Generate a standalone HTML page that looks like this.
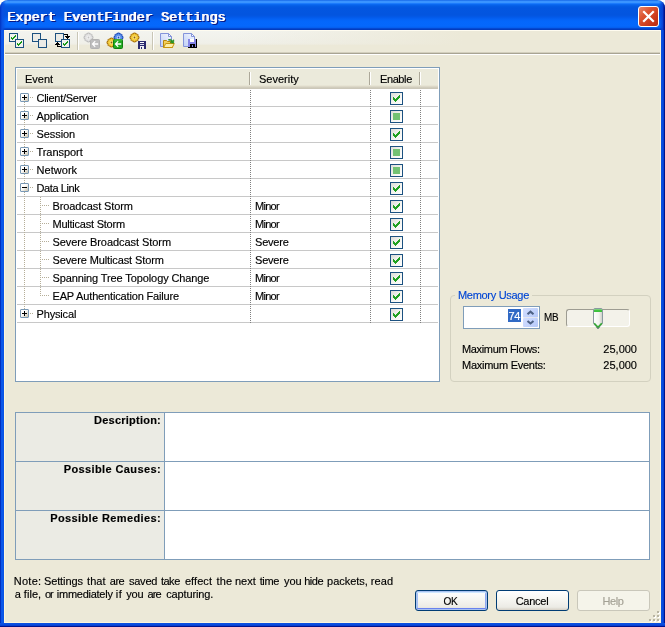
<!DOCTYPE html>
<html><head><meta charset="utf-8"><title>Expert EventFinder Settings</title>
<style>
html,body{margin:0;padding:0}
body{width:665px;height:627px;overflow:hidden;position:relative;background:#fff;font-family:"Liberation Sans",sans-serif;font-size:11px;color:#000;-webkit-text-stroke:0.15px}
i,b{position:absolute;display:block;font-style:normal;font-weight:normal}
.abs{position:absolute}
.win{will-change:transform;position:absolute;left:0;top:0;width:665px;height:627px;background:#ece9d8;border-radius:8px 8px 0 0;overflow:hidden}
.tb{position:absolute;left:0;top:0;width:665px;height:30px;background:linear-gradient(to bottom,#0a59e0 0px,#3a93ff 1px,#3a94ff 2.5px,#1c7bfc 3.5px,#0a68f0 4.5px,#045ce4 6px,#0356e0 8px,#0355df 15px,#0359e8 17px,#0461f3 19px,#0467fb 21px,#0568fc 26px,#0560f0 27.5px,#0449d2 28.5px,#0236b4 30px)}
.tbl{position:absolute;left:0;top:0;width:6px;height:30px;background:linear-gradient(to right,#0033c0 0,#0a4fe0 2px,rgba(10,79,224,0) 6px)}
.tbr{position:absolute;right:0;top:0;width:6px;height:30px;background:linear-gradient(to left,#00138c 0,#00138c 1px,#0a3fd0 2px,rgba(10,63,208,0) 6px)}
.ttl{position:absolute;left:7px;top:10px;height:16px;white-space:pre;font-family:"Liberation Mono",monospace;font-weight:normal;font-size:13.4px;letter-spacing:0.05px;line-height:16px;color:#fff;text-shadow:1px 0 0 #fff,2px 1px 0 #0a1883,1px 1px 0 #0a1883}
.bl{position:absolute;left:0;top:30px;width:4px;height:597px;background:linear-gradient(to right,#0030c0 0,#0030c0 1px,#0a55e8 1px,#0a58ea 3px,#0850e0 4px)}
.br{position:absolute;left:661px;top:30px;width:4px;height:597px;background:linear-gradient(to right,#0a50e0 0,#0a50e0 1px,#0848dc 2px,#0638c8 3px,#00138c 3px,#00138c 4px)}
.bb{position:absolute;left:0;top:623px;width:665px;height:4px;background:linear-gradient(to bottom,#0a50e0 0,#0a50e0 1px,#0848dc 2px,#0638c8 3px,#00138c 3px,#00138c 4px)}
.cls{position:absolute;left:638px;top:6px;width:19px;height:19px;border:1px solid #fff;border-radius:3px;background:linear-gradient(135deg,#e8866a 0%,#dd5430 35%,#c8371a 75%,#b52c12 100%)}
.tool{position:absolute;left:4px;top:30px;width:657px;height:24px;background:linear-gradient(to bottom,#fffcf0 0,#fffcf0 1px,#f3f4ef 1px,#f0f0e9 13px,#efeee6 14px,#ece9d8 15.5px,#ece9d8 21.5px,#d3cfbd 22.5px,#a8a493 23.5px,#a8a493 24px)}
.toolf{position:absolute;left:0;top:1px;width:657px;height:15px;background:linear-gradient(to right,rgba(236,233,216,0) 0,rgba(236,233,216,0) 230px,rgba(236,233,216,1) 460px)}
.toolw{position:absolute;left:4px;top:54px;width:657px;height:1px;background:#fff}
.sep{position:absolute;top:32px;width:1px;height:18px;background:#c9c6b6;box-shadow:1px 0 0 #fff}
svg{position:absolute;display:block;overflow:visible}
/* list */
.list{position:absolute;left:15px;top:67px;width:421px;height:311px;border:1px solid #7f9db9;padding:1px;background:#fff;overflow:hidden}
.list>*{position:absolute}
.lhdr{left:1px;top:1px;width:421px;height:20px;background:linear-gradient(to bottom,#ebeadb 0,#ebeadb 16px,#e2decd 17px,#d6d2c2 18px,#cbc7b8 19px,#cbc7b8 20px)}
.list .row{left:1px;width:421px;height:17px;border-bottom:1px solid #c8c8c8;margin-top:1px}
.list .vd,.list .tv,.list .th{margin-left:1px;margin-top:1px}
.hl{position:absolute;top:1px;line-height:19px;white-space:nowrap}
.hs{top:3px;width:1px;height:13px;background:#aca899;box-shadow:1px 0 0 #fff}
.vd{top:21px;width:1px;height:233px;background:linear-gradient(to bottom,#808080 50%,rgba(0,0,0,0) 50%);background-size:1px 2px}
.tv{width:1px;background:linear-gradient(to bottom,#b5ae98 50%,rgba(0,0,0,0) 50%);background-size:1px 2px}
.row .th{top:8px;height:1px;margin:0;background:linear-gradient(to right,#b5ae98 50%,rgba(0,0,0,0) 50%);background-size:2px 1px}
.t{position:absolute;top:0;line-height:18px;white-space:nowrap}
.xb{left:3px;top:4px;width:7px;height:7px;border:1px solid #7898b5;border-radius:1px;background:linear-gradient(135deg,#fff 0,#fff 40%,#c9c2ad 100%)}
.xb:before{content:"";position:absolute;left:1px;top:3px;width:5px;height:1px;background:#000}
.xb.plus:after{content:"";position:absolute;left:3px;top:1px;width:1px;height:5px;background:#000}
.cb{left:373px;top:3px;width:11px;height:11px;border:1px solid #1c5180;background:linear-gradient(135deg,#dcdcd7 0,#f3f3ef 50%,#fff 100%)}
.cb.check:after{content:"";position:absolute;left:2px;top:2px;width:7px;height:7px;background:
 linear-gradient(#21a121,#21a121) 0 2px/1px 3px no-repeat,
 linear-gradient(#21a121,#21a121) 1px 3px/1px 3px no-repeat,
 linear-gradient(#21a121,#21a121) 2px 4px/1px 3px no-repeat,
 linear-gradient(#21a121,#21a121) 3px 3px/1px 3px no-repeat,
 linear-gradient(#21a121,#21a121) 4px 2px/1px 3px no-repeat,
 linear-gradient(#21a121,#21a121) 5px 1px/1px 3px no-repeat,
 linear-gradient(#21a121,#21a121) 6px 0/1px 3px no-repeat}
.cb.mixed:after{content:"";position:absolute;left:2px;top:2px;width:7px;height:7px;background:#73c273}
/* group */
.grp{position:absolute;left:450px;top:295px;width:199px;height:85px;border:1px solid #d3d1c0;border-radius:4px}
.grpl{position:absolute;left:455px;top:288px;padding:0 3px;background:#ece9d8;color:#0046d5;line-height:14px;white-space:nowrap}
.inp{position:absolute;left:463px;top:306px;width:75px;height:21px;border:1px solid #7f9db9;background:#fff}
.sel{position:absolute;left:508px;top:309px;width:13px;height:13px;background:#316ac5;color:#fff;line-height:15px;text-align:center;white-space:nowrap;letter-spacing:-0.4px;text-indent:-0.4px;overflow:hidden}
.spu,.spd{position:absolute;left:523px;width:15px;border-radius:1px;background:linear-gradient(135deg,#d3defd 0,#c3d3fd 55%,#b6c8f7 100%)}
.spu{top:308px;height:9px;border-bottom:1px solid #e4e6ee}.spd{top:318px;height:9px}
.lbl{position:absolute;white-space:nowrap;line-height:14px}
.trk{position:absolute;left:566px;top:309px;width:62px;height:16px;border:1px solid;border-color:#9d9c92 #fff #fff #9d9c92;border-radius:3px;background:#f3f2ea}
/* desc table */
.dt{position:absolute;left:15px;top:412px;width:633px;height:146px;border:1px solid #7f9db9;background:#fff}
.dtl{position:absolute;left:0;top:0;width:148px;height:146px;background:#ebebe4;border-right:1px solid #7f9db9}
.dth{position:absolute;left:0;width:633px;height:1px;background:#7f9db9}
.dtt{position:absolute;right:488px;font-weight:bold;white-space:nowrap;line-height:14px}
/* buttons */
.btn{position:absolute;top:590px;width:71px;height:19px;border:1px solid #003c74;border-radius:3px;background:linear-gradient(to bottom,#fff 0,#f6f6f1 45%,#ecebe5 85%,#d6d0c5 100%);text-align:center;line-height:21px}
.btn.def{box-shadow:inset 0 0 0 1px #a9c2f0,inset 0 2px 0 0 #cee7ff,inset 0 -2px 0 0 #6982ee,inset 2px 0 0 0 #a5c0f3,inset -2px 0 0 0 #8fa8ef}
.btn.dis{border-color:#c9c7ba;background:#f5f4ea;color:#a4a195}
.w{position:absolute;white-space:nowrap;line-height:14px;letter-spacing:0.08px}
.inl{position:absolute;background:#fbf5dc}
.vd,.tv{z-index:1}.xb{z-index:2}
</style></head>
<body>
<div class="win">
<div class="tb"><div class="tbl"></div><div class="tbr"></div></div>
<div class="ttl">Expert EventFinder Settings</div>
<div class="cls"><svg width="19" height="19" style="left:0;top:0"><path d="M5 5 L14 14 M14 5 L5 14" stroke="#fff" stroke-width="2.2" stroke-linecap="square" fill="none"/></svg></div>
<div class="bl"></div><div class="br"></div><div class="bb"></div>
<div class="tool"><div class="toolf"></div></div><div class="toolw"></div><div class="inl" style="left:4px;top:30px;width:1px;height:593px"></div><div class="inl" style="left:660px;top:30px;width:1px;height:593px"></div><div class="inl" style="left:4px;top:622px;width:657px;height:1px"></div>
<i class="sep" style="left:77px"></i><i class="sep" style="left:152px"></i>
<!-- ICONS -->
<!-- icon1 -->
<svg width="16" height="16" style="left:9px;top:33px" shape-rendering="crispEdges">
<rect x="0.5" y="0.5" width="8" height="8" fill="#f2f2ee" stroke="#1c5180"/><rect x="6.5" y="6.5" width="8" height="8" fill="#f2f2ee" stroke="#1c5180"/>
<g fill="#189a18"><rect x="2" y="4" width="1" height="2"/><rect x="3" y="5" width="1" height="2"/><rect x="4" y="4" width="1" height="2"/><rect x="5" y="3" width="1" height="2"/><rect x="6" y="2" width="1" height="2"/>
<rect x="8" y="10" width="1" height="2"/><rect x="9" y="11" width="1" height="2"/><rect x="10" y="10" width="1" height="2"/><rect x="11" y="9" width="1" height="2"/><rect x="12" y="8" width="1" height="2"/></g></svg>
<!-- icon2 -->
<svg width="16" height="16" style="left:32px;top:33px" shape-rendering="crispEdges">
<rect x="0.5" y="0.5" width="8" height="8" fill="#ebebe6" stroke="#1c5180"/><rect x="6.5" y="6.5" width="8" height="8" fill="#ebebe6" stroke="#1c5180"/></svg>
<!-- icon3 -->
<svg width="16" height="16" style="left:55px;top:33px" shape-rendering="crispEdges">
<rect x="0.5" y="0.5" width="8" height="8" fill="#ebebe6" stroke="#1c5180"/><rect x="6.5" y="6.5" width="8" height="8" fill="#f2f2ee" stroke="#1c5180"/>
<g fill="#189a18"><rect x="8" y="10" width="1" height="2"/><rect x="9" y="11" width="1" height="2"/><rect x="10" y="10" width="1" height="2"/><rect x="11" y="9" width="1" height="2"/><rect x="12" y="8" width="1" height="2"/></g>
<g fill="#000"><rect x="9" y="1" width="4" height="1"/><rect x="12" y="1" width="1" height="3"/><rect x="10" y="3" width="5" height="1"/><rect x="11" y="4" width="3" height="1"/><rect x="12" y="5" width="1" height="1"/>
<rect x="2" y="13" width="4" height="1"/><rect x="2" y="11" width="1" height="3"/><rect x="0" y="11" width="5" height="1"/><rect x="1" y="10" width="3" height="1"/><rect x="2" y="9" width="1" height="1"/></g></svg>
<!-- icon4 disabled gear + arrow -->
<svg width="17" height="17" style="left:84px;top:33px"><path d="M8.95 3.54 L8.95 5.46 L7.92 5.61 L7.71 6.13 L8.32 6.97 L6.97 8.32 L6.13 7.71 L5.61 7.92 L5.46 8.95 L3.54 8.95 L3.39 7.92 L2.87 7.71 L2.03 8.32 L0.68 6.97 L1.29 6.13 L1.08 5.61 L0.05 5.46 L0.05 3.54 L1.08 3.39 L1.29 2.87 L0.68 2.03 L2.03 0.68 L2.87 1.29 L3.39 1.08 L3.54 0.05 L5.46 0.05 L5.61 1.08 L6.13 1.29 L6.97 0.68 L8.32 2.03 L7.71 2.87 L7.92 3.39 Z" fill="#e4e4e4" stroke="#bcbcbc" stroke-width="1" stroke-linejoin="round"/><circle cx="4.5" cy="4.5" r="1.7" fill="#f4f4f4"/><circle cx="4.5" cy="4.5" r="0.9" fill="#c4c4c4"/><rect x="6.5" y="6.5" width="9" height="9" rx="1" fill="#bdbdbd" stroke="#b2b2b2"/><path d="M7.6 11 L10.8 7.8 L11.6 8.6 L10.2 10.2 L14.2 10.2 L14.2 11.8 L10.2 11.8 L11.6 13.4 L10.8 14.2 Z" fill="#fff"/></svg>
<!-- icon5 gears + green arrow -->
<svg width="17" height="17" style="left:107px;top:33px"><path d="M15.95 3.54 L15.95 5.46 L14.92 5.61 L14.71 6.13 L15.32 6.97 L13.97 8.32 L13.13 7.71 L12.61 7.92 L12.46 8.95 L10.54 8.95 L10.39 7.92 L9.87 7.71 L9.03 8.32 L7.68 6.97 L8.29 6.13 L8.08 5.61 L7.05 5.46 L7.05 3.54 L8.08 3.39 L8.29 2.87 L7.68 2.03 L9.03 0.68 L9.87 1.29 L10.39 1.08 L10.54 0.05 L12.46 0.05 L12.61 1.08 L13.13 1.29 L13.97 0.68 L15.32 2.03 L14.71 2.87 L14.92 3.39 Z" fill="#5b93f0" stroke="#1a46b8" stroke-width="1" stroke-linejoin="round"/><circle cx="11.5" cy="4.5" r="1.7" fill="#d8e6ff"/><circle cx="11.5" cy="4.5" r="0.9" fill="#1a46b8"/><path d="M8.95 8.54 L8.95 10.46 L7.92 10.61 L7.71 11.13 L8.32 11.97 L6.97 13.32 L6.13 12.71 L5.61 12.92 L5.46 13.95 L3.54 13.95 L3.39 12.92 L2.87 12.71 L2.03 13.32 L0.68 11.97 L1.29 11.13 L1.08 10.61 L0.05 10.46 L0.05 8.54 L1.08 8.39 L1.29 7.87 L0.68 7.03 L2.03 5.68 L2.87 6.29 L3.39 6.08 L3.54 5.05 L5.46 5.05 L5.61 6.08 L6.13 6.29 L6.97 5.68 L8.32 7.03 L7.71 7.87 L7.92 8.39 Z" fill="#f6ce3a" stroke="#a87008" stroke-width="1" stroke-linejoin="round"/><circle cx="4.5" cy="9.5" r="1.7" fill="#fbe68a"/><circle cx="4.5" cy="9.5" r="0.9" fill="#8e5e0a"/><rect x="6.5" y="6.5" width="9" height="9" rx="1" fill="#22aa22" stroke="#0f7f0f"/><path d="M7.5 6.9 H15.1" stroke="#5fd05f" stroke-width="0.8"/><path d="M7.6 11 L10.8 7.8 L11.6 8.6 L10.2 10.2 L14.2 10.2 L14.2 11.8 L10.2 11.8 L11.6 13.4 L10.8 14.2 Z" fill="#fff"/></svg>
<!-- icon6 gear + floppy -->
<svg width="17" height="17" style="left:130px;top:33px"><path d="M8.95 3.54 L8.95 5.46 L7.92 5.61 L7.71 6.13 L8.32 6.97 L6.97 8.32 L6.13 7.71 L5.61 7.92 L5.46 8.95 L3.54 8.95 L3.39 7.92 L2.87 7.71 L2.03 8.32 L0.68 6.97 L1.29 6.13 L1.08 5.61 L0.05 5.46 L0.05 3.54 L1.08 3.39 L1.29 2.87 L0.68 2.03 L2.03 0.68 L2.87 1.29 L3.39 1.08 L3.54 0.05 L5.46 0.05 L5.61 1.08 L6.13 1.29 L6.97 0.68 L8.32 2.03 L7.71 2.87 L7.92 3.39 Z" fill="#f6ce3a" stroke="#a87008" stroke-width="1" stroke-linejoin="round"/><circle cx="4.5" cy="4.5" r="1.7" fill="#fbe68a"/><circle cx="4.5" cy="4.5" r="0.9" fill="#8e5e0a"/><g shape-rendering="crispEdges"><rect x="8" y="8" width="8" height="8" fill="#2b2b6e"/><rect x="10" y="9" width="4" height="1" fill="#fff"/><rect x="10" y="11" width="4" height="1" fill="#d8d8ee"/><rect x="10" y="13" width="4" height="3" fill="#f0f0f6"/><rect x="11" y="14" width="1" height="2" fill="#2b2b6e"/></g></svg>
<!-- icon7 doc + folder -->
<svg width="16" height="16" style="left:160px;top:33px"><defs><linearGradient id="dg" x1="1" y1="0" x2="0" y2="1"><stop offset="0" stop-color="#f6f9ff"/><stop offset="1" stop-color="#bfcef5"/></linearGradient></defs>
<path d="M0.5 0.5 L8.5 0.5 L11.5 3.5 L11.5 13.5 L0.5 13.5 Z" fill="url(#dg)" stroke="#8494da"/><path d="M8.5 0.5 L8.5 3.5 L11.5 3.5 Z" fill="#fff" stroke="#8494da" stroke-linejoin="round"/>
<path d="M3.5 7.5 L6.5 7.5 L7.5 8.5 L12.5 8.5 L12.5 14.5 L3.5 14.5 Z" fill="#f3cf5a" stroke="#b8860b"/><path d="M3.7 14.5 L5.7 10.5 L14.3 10.5 L12.3 14.5 Z" fill="#fdeea8" stroke="#c9960f"/>
<path d="M8.2 6.8 Q11 5.4 12.3 7.8 L13.8 6.8 L13.6 10.2 L10.2 9.6 L11.4 8.7 Q10.4 7 8.2 6.8 Z" fill="#2aa52a" stroke="#117511" stroke-width="0.6"/></svg>
<!-- icon8 doc + floppy -->
<svg width="16" height="16" style="left:183px;top:33px">
<path d="M0.5 0.5 L8.5 0.5 L11.5 3.5 L11.5 13.5 L0.5 13.5 Z" fill="url(#dg)" stroke="#8494da"/><path d="M8.5 0.5 L8.5 3.5 L11.5 3.5 Z" fill="#fff" stroke="#8494da" stroke-linejoin="round"/>
<g shape-rendering="crispEdges"><rect x="5" y="6" width="9" height="9" fill="#000"/><rect x="5" y="6" width="8" height="8" fill="#8585e6"/><rect x="7" y="6" width="4" height="3" fill="#fff"/><rect x="7" y="11" width="5" height="4" fill="#000"/><rect x="9" y="12" width="1" height="2" fill="#8585e6"/><rect x="13" y="7" width="1" height="8" fill="#000"/></g></svg>
<!-- /ICONS -->
<div class="list">
<div class="lhdr"><span class="hl" style="left:8px">Event</span><i class="hs" style="left:232px"></i><span class="hl" style="left:242px">Severity</span><i class="hs" style="left:352px"></i><span class="hl" style="left:363px;letter-spacing:-0.4px">Enable</span><i class="hs" style="left:402px"></i></div>
<i class="vd" style="left:233px"></i><i class="vd" style="left:353px"></i><i class="vd" style="left:403px"></i>
<i class="tv" style="left:7px;top:33px;height:212px"></i><i class="tv" style="left:23px;top:128px;height:100px"></i>
<div class="row" style="top:20px"><i class="th" style="left:13px;width:4px"></i><b class="xb plus"></b><span class="t" style="left:19.5px;letter-spacing:-0.27px">Client/Server</span><b class="cb check"></b></div>
<div class="row" style="top:38px"><i class="th" style="left:13px;width:4px"></i><b class="xb plus"></b><span class="t" style="left:19.5px;letter-spacing:-0.14px">Application</span><b class="cb mixed"></b></div>
<div class="row" style="top:56px"><i class="th" style="left:13px;width:4px"></i><b class="xb plus"></b><span class="t" style="left:19.5px;letter-spacing:-0.07px">Session</span><b class="cb check"></b></div>
<div class="row" style="top:74px"><i class="th" style="left:13px;width:4px"></i><b class="xb plus"></b><span class="t" style="left:19.5px;letter-spacing:-0.06px">Transport</span><b class="cb mixed"></b></div>
<div class="row" style="top:92px"><i class="th" style="left:13px;width:4px"></i><b class="xb plus"></b><span class="t" style="left:19.5px;letter-spacing:0.04px">Network</span><b class="cb mixed"></b></div>
<div class="row" style="top:110px"><i class="th" style="left:13px;width:4px"></i><b class="xb minus"></b><span class="t" style="left:19.5px;letter-spacing:-0.41px">Data Link</span><b class="cb check"></b></div>
<div class="row" style="top:128px"><i class="th" style="left:25px;width:8px"></i><span class="t" style="left:35.5px;letter-spacing:-0.1px">Broadcast Storm</span><span class="t" style="left:238px;letter-spacing:-0.7px">Minor</span><b class="cb check"></b></div>
<div class="row" style="top:146px"><i class="th" style="left:25px;width:8px"></i><span class="t" style="left:35.5px;letter-spacing:-0.23px">Multicast Storm</span><span class="t" style="left:238px;letter-spacing:-0.7px">Minor</span><b class="cb check"></b></div>
<div class="row" style="top:164px"><i class="th" style="left:25px;width:8px"></i><span class="t" style="left:35.5px;letter-spacing:-0.06px">Severe Broadcast Storm</span><span class="t" style="left:238px;letter-spacing:-0.2px">Severe</span><b class="cb check"></b></div>
<div class="row" style="top:182px"><i class="th" style="left:25px;width:8px"></i><span class="t" style="left:35.5px;letter-spacing:-0.11px">Severe Multicast Storm</span><span class="t" style="left:238px;letter-spacing:-0.2px">Severe</span><b class="cb check"></b></div>
<div class="row" style="top:200px"><i class="th" style="left:25px;width:8px"></i><span class="t" style="left:35.5px;letter-spacing:-0.11px">Spanning Tree Topology Change</span><span class="t" style="left:238px;letter-spacing:-0.7px">Minor</span><b class="cb check"></b></div>
<div class="row" style="top:218px"><i class="th" style="left:25px;width:8px"></i><span class="t" style="left:35.5px;letter-spacing:-0.16px">EAP Authentication Failure</span><span class="t" style="left:238px;letter-spacing:-0.7px">Minor</span><b class="cb check"></b></div>
<div class="row" style="top:236px"><i class="th" style="left:13px;width:4px"></i><b class="xb plus"></b><span class="t" style="left:19.5px;letter-spacing:-0.16px">Physical</span><b class="cb check"></b></div>
</div>
<div class="grp"></div><div class="grpl" style="letter-spacing:-0.3px">Memory Usage</div>
<div class="inp"></div><div class="sel">74</div>
<div class="spu"></div><div class="spd"></div>
<svg width="15" height="20" style="left:523px;top:308px"><path d="M4.5 6.2 L7.5 3.7 L10.5 6.2 M4.5 13 L7.5 15.5 L10.5 13" stroke="#4d6185" stroke-width="2.1" fill="none"/></svg>
<div class="lbl" style="left:543.5px;top:310px;letter-spacing:-0.3px;transform:scaleX(0.9);transform-origin:0 0">MB</div>
<div class="trk"></div>
<svg width="11" height="22" style="left:593px;top:308px"><defs><linearGradient id="tg" x1="0" y1="0" x2="1" y2="0"><stop offset="0" stop-color="#fff"/><stop offset="0.6" stop-color="#f3f3ef"/><stop offset="1" stop-color="#c9ccc4"/></linearGradient></defs><path d="M0.5 2 Q0.5 0.5 2 0.5 L8 0.5 Q9.5 0.5 9.5 2 L9.5 15.5 L5 20.5 L0.5 15.5 Z" fill="url(#tg)" stroke="#8a9aa0"/><path d="M1 2 Q1 1 2 1 L8 1 Q9 1 9 2 L9 4 L1 4 Z" fill="#3cc23c"/><path d="M1 1.6 H9" stroke="#8fd48f" stroke-width="0.8"/><path d="M1.2 15.2 L5 19.4 L8.8 15.2" stroke="#35a835" stroke-width="1.6" fill="none"/><path d="M3.6 19.2 L5 20.7 L6.4 19.2" stroke="#5a6a70" stroke-width="1" fill="none"/></svg>
<div class="lbl" style="left:462px;top:342px;letter-spacing:-0.35px">Maximum Flows:</div><div class="lbl" style="right:28px;top:342px">25,000</div>
<div class="lbl" style="left:462px;top:358px;letter-spacing:-0.26px">Maximum Events:</div><div class="lbl" style="right:28px;top:358px">25,000</div>
<div class="dt"><div class="dtl"></div><div class="dth" style="top:48px"></div><div class="dth" style="top:97px"></div>
<div class="dtt" style="top:0px;letter-spacing:0.23px">Description:</div><div class="dtt" style="top:49px;letter-spacing:0.39px">Possible Causes:</div><div class="dtt" style="top:98px;letter-spacing:0.38px">Possible Remedies:</div></div>
<span class="w" style="left:13.8px;top:574px;letter-spacing:0.25px">Note:</span><span class="w" style="left:43.9px;top:574px;letter-spacing:-0.10px">Settings</span><span class="w" style="left:87.0px;top:574px;letter-spacing:0.07px">that</span><span class="w" style="left:109.8px;top:574px;letter-spacing:-0.50px">are</span><span class="w" style="left:128.9px;top:574px;letter-spacing:-0.20px">saved</span><span class="w" style="left:160.9px;top:574px;letter-spacing:-0.47px">take</span><span class="w" style="left:184.9px;top:574px;letter-spacing:0.08px">effect</span><span class="w" style="left:216.5px;top:574px;letter-spacing:0.20px">the</span><span class="w" style="left:234.9px;top:574px;letter-spacing:0.00px">next</span><span class="w" style="left:259.7px;top:574px;letter-spacing:-0.40px">time</span><span class="w" style="left:284.1px;top:574px;letter-spacing:-0.10px">you</span><span class="w" style="left:304.2px;top:574px;letter-spacing:-0.47px">hide</span><span class="w" style="left:327.1px;top:574px;letter-spacing:-0.04px">packets,</span><span class="w" style="left:370.7px;top:574px;letter-spacing:0.17px">read</span>
<span class="w" style="left:14.8px;top:587px;letter-spacing:0.00px">a</span><span class="w" style="left:23.8px;top:587px;letter-spacing:0.05px">file,</span><span class="w" style="left:44.9px;top:587px;letter-spacing:-0.90px">or</span><span class="w" style="left:56.8px;top:587px;letter-spacing:-0.26px">immediately</span><span class="w" style="left:115.8px;top:587px;letter-spacing:0.50px">if</span><span class="w" style="left:126.3px;top:587px;letter-spacing:-0.20px">you</span><span class="w" style="left:147.4px;top:587px;letter-spacing:-0.85px">are</span><span class="w" style="left:166.2px;top:587px;letter-spacing:-0.12px">capturing.</span>
<div class="btn def" style="left:415px"><span style="display:inline-block;transform:scaleX(0.92);letter-spacing:-0.4px;margin-left:-2px">OK</span></div><div class="btn" style="left:496px;letter-spacing:-0.25px;text-indent:-1px">Cancel</div><div class="btn dis" style="left:577px;letter-spacing:-0.4px;text-indent:-1px">Help</div>
<svg width="12" height="12" style="left:649px;top:611px" shape-rendering="crispEdges"><g fill="#fff"><rect x="9" y="1" width="2" height="2"/><rect x="5" y="5" width="2" height="2"/><rect x="9" y="5" width="2" height="2"/><rect x="1" y="9" width="2" height="2"/><rect x="5" y="9" width="2" height="2"/><rect x="9" y="9" width="2" height="2"/></g><g fill="#b8b4a2"><rect x="8" y="0" width="2" height="2"/><rect x="4" y="4" width="2" height="2"/><rect x="8" y="4" width="2" height="2"/><rect x="0" y="8" width="2" height="2"/><rect x="4" y="8" width="2" height="2"/><rect x="8" y="8" width="2" height="2"/></g></svg>
</div>
</body></html>
